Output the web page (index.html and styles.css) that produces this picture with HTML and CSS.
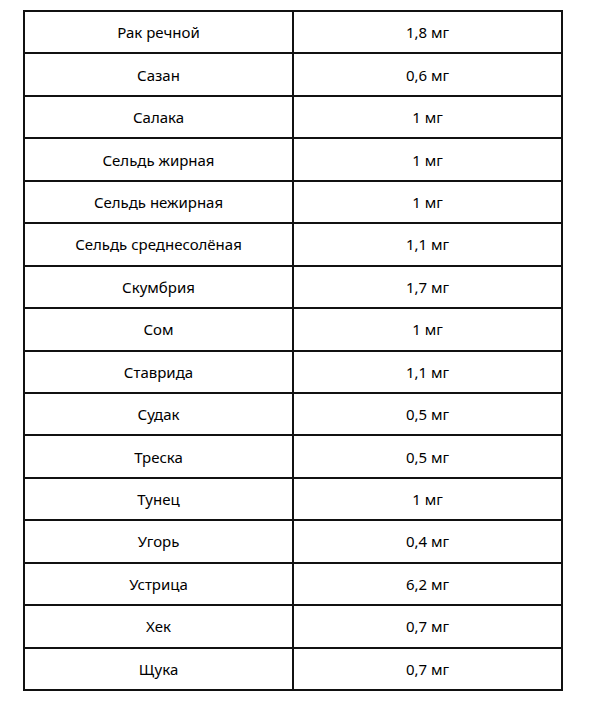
FILE: index.html
```html
<!DOCTYPE html>
<html lang="ru">
<head>
<meta charset="utf-8">
<link rel="stylesheet" href="styles.css">
</head>
<body>
<table class="grid">
<tbody>
<tr><td>Рак речной</td><td>1,8 мг</td></tr>
<tr><td>Сазан</td><td>0,6 мг</td></tr>
<tr><td>Салака</td><td>1 мг</td></tr>
<tr><td>Сельдь жирная</td><td>1 мг</td></tr>
<tr><td>Сельдь нежирная</td><td>1 мг</td></tr>
<tr><td>Сельдь среднесолёная</td><td>1,1 мг</td></tr>
<tr><td>Скумбрия</td><td>1,7 мг</td></tr>
<tr><td>Сом</td><td>1 мг</td></tr>
<tr><td>Ставрида</td><td>1,1 мг</td></tr>
<tr><td>Судак</td><td>0,5 мг</td></tr>
<tr><td>Треска</td><td>0,5 мг</td></tr>
<tr><td>Тунец</td><td>1 мг</td></tr>
<tr><td>Угорь</td><td>0,4 мг</td></tr>
<tr><td>Устрица</td><td>6,2 мг</td></tr>
<tr><td>Хек</td><td>0,7 мг</td></tr>
<tr><td>Щука</td><td>0,7 мг</td></tr>
</tbody>
</table>
</body>
</html>
```
FILE: styles.css
```css
html, body {
  margin: 0;
  padding: 0;
  background: #ffffff;
}
body {
  padding: 10px 0 0 23px;
  font-family: "Noto Sans", "Open Sans", sans-serif;
  color: #000000;
}
.grid {
  border-collapse: collapse;
  width: 540px;
  table-layout: fixed;
}
.grid td {
  border: 2px solid #111111;
  height: 40.45px;
  padding: 0;
  text-align: center;
  vertical-align: middle;
  font-size: 15px;
  line-height: 20px;
}
```
